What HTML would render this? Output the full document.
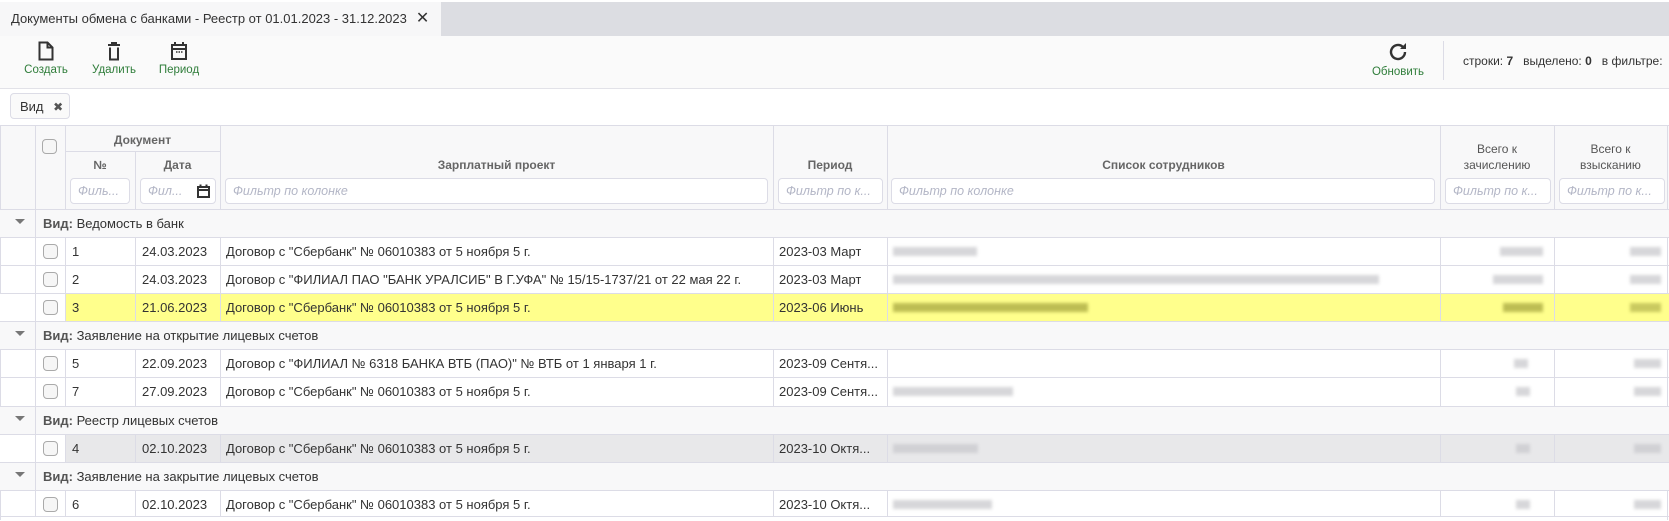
<!DOCTYPE html>
<html><head><meta charset="utf-8"><style>
*{box-sizing:border-box;margin:0;padding:0}
body{width:1669px;height:521px;overflow:hidden;background:#fff;font-family:"Liberation Sans","DejaVu Sans",sans-serif;font-size:13px;color:#333;position:relative}
.a{position:absolute}
.tabbar{left:0;top:2px;width:1669px;height:34px;background:#dcdde2}
.tab{left:0;top:2px;height:34px;background:#f7f7f8;padding:9px 12px 0 11px;font-size:13px;color:#333;white-space:nowrap;display:flex;align-items:flex-start}
.tb{left:0;top:36px;width:1669px;height:53px;background:#fafafa;border-bottom:1px solid #e2e2e8}
.btn{top:0;text-align:center;color:#2f7d3a;font-size:11.5px}
.btn svg{display:block;margin:5px auto 3px}
.chip{left:10px;top:93px;width:60px;height:26px;border:1px solid #dcdce6;border-radius:4px;background:#fafafa;padding:5px 0 0 9px;font-size:13px}
.v{background:#dcdce6;width:1px}
.h{background:#dcdce6;height:1px}
.hd{color:#666;font-size:12px;font-weight:bold;text-align:center}
.inp{height:26px;border:1px solid #dcdce6;border-radius:4px;background:#fff;font-style:italic;color:#b3b6c6;font-size:12.5px;padding:5px 0 0 7px;white-space:nowrap;overflow:hidden}
.row{left:0;width:1669px;height:28px}
.cb{width:15px;height:15px;border:1px solid #aaa;border-radius:4px;background:#f6f6f6}
.t{font-size:13px;white-space:nowrap;overflow:hidden}
.bl{background:#c9c9cd;opacity:.75;height:9px;filter:blur(1.5px)}
</style></head><body>
<div class="a tabbar"></div>
<div class="a tab">Документы обмена с банками - Реестр от 01.01.2023 - 31.12.2023<span style="margin-left:9px;font-size:16px;line-height:16px;color:#333">✕</span></div>
<div class="a tb">
 <div class="a btn" style="left:22px;width:48px"><svg width="16" height="20" viewBox="0 0 16 20"><path d="M1.5 1.5h8l5 5v12h-13z M9.5 1.5v5h5" fill="none" stroke="#333" stroke-width="2"/></svg>Создать</div>
 <div class="a btn" style="left:88px;width:52px"><svg width="14" height="20" viewBox="0 0 14 20"><path d="M1 4h12 M4 2h6 M3 6.5v12h8v-12" fill="none" stroke="#333" stroke-width="2"/></svg>Удалить</div>
 <div class="a btn" style="left:155px;width:48px"><svg width="18" height="20" viewBox="0 0 18 20"><path d="M2 4h14v14H2z M2 8h14 M5 1v4 M13 1v4" fill="none" stroke="#333" stroke-width="2"/><path d="M6 11h1.5M8.5 11h1.5M11 11h1.5" stroke="#333" stroke-width="1.5"/></svg>Период</div>
 <div class="a btn" style="left:1370px;width:56px"><svg width="22" height="22" viewBox="0 0 22 22"><path d="M18 11a7 7 0 1 1-2.2-5.1" fill="none" stroke="#333" stroke-width="2.4"/><path d="M19 2v6h-6z" fill="#333"/></svg>Обновить</div>
 <div class="a v" style="left:1443px;top:5px;height:39px"></div>
 <div class="a t" style="left:1463px;top:18px;font-size:12px">строки: <b>7</b>&nbsp;&nbsp; выделено: <b>0</b>&nbsp;&nbsp; в фильтре:</div>
</div>
<div class="a chip">Вид <span style="font-size:12px;margin-left:6px;color:#555">✖</span></div>
<div class="a" style="left:0;top:125px;width:1669px;height:84px;background:#f8f8f9"></div>
<div class="a h" style="left:0;top:125px;width:1669px"></div>
<div class="a h" style="left:65px;top:151px;width:155px"></div>
<div class="a v" style="left:0;top:125px;height:395px"></div>
<div class="a v" style="left:1667px;top:125px;height:395px"></div>
<div class="a cb" style="left:42px;top:139px"></div>
<div class="a hd" style="left:65px;top:133px;width:155px">Документ</div>
<div class="a hd" style="left:65px;top:158px;width:70px">№</div>
<div class="a hd" style="left:135px;top:158px;width:85px">Дата</div>
<div class="a hd" style="left:220px;top:158px;width:553px">Зарплатный проект</div>
<div class="a hd" style="left:773px;top:158px;width:114px">Период</div>
<div class="a hd" style="left:887px;top:158px;width:553px">Список сотрудников</div>
<div class="a hd" style="left:1440px;top:141px;width:114px;line-height:16px;font-weight:normal;color:#555">Всего к<br>зачислению</div>
<div class="a hd" style="left:1554px;top:141px;width:113px;line-height:16px;font-weight:normal;color:#555">Всего к<br>взысканию</div>
<div class="a inp" style="left:70px;top:178px;width:60px">Филь...</div>
<div class="a inp" style="left:140px;top:178px;width:76px">Фил...<svg style="position:absolute;right:5px;top:5px" width="13" height="14" viewBox="0 0 13 14"><path d="M1 3h11v10H1z M1 6h11 M3.5 0.5v3 M9.5 0.5v3" fill="none" stroke="#333" stroke-width="2"/></svg></div>
<div class="a inp" style="left:225px;top:178px;width:543px">Фильтр по колонке</div>
<div class="a inp" style="left:778px;top:178px;width:105px">Фильтр по к...</div>
<div class="a inp" style="left:891px;top:178px;width:544px">Фильтр по колонке</div>
<div class="a inp" style="left:1445px;top:178px;width:106px">Фильтр по к...</div>
<div class="a inp" style="left:1559px;top:178px;width:106px">Фильтр по к...</div>
<div class="a v" style="left:35px;top:125px;height:84px"></div>
<div class="a v" style="left:65px;top:125px;height:84px"></div>
<div class="a v" style="left:135px;top:151px;height:58px"></div>
<div class="a v" style="left:220px;top:125px;height:84px"></div>
<div class="a v" style="left:773px;top:125px;height:84px"></div>
<div class="a v" style="left:887px;top:125px;height:84px"></div>
<div class="a v" style="left:1440px;top:125px;height:84px"></div>
<div class="a v" style="left:1554px;top:125px;height:84px"></div>

<div class="a row" style="top:209px;background:#f8f8f9;border-top:1px solid #dcdce6"><span class="a" style="left:15px;top:9px;border-left:5px solid transparent;border-right:5px solid transparent;border-top:5px solid #777"></span><div class="a v" style="left:35px;top:0;height:28px"></div><span class="a t" style="left:43px;top:6px"><b style="color:#555">Вид:</b> Ведомость в банк</span></div>

<div class="a row" style="top:237px;border-top:1px solid #dcdce6"><div class="a v" style="left:35px;height:28px"></div><div class="a cb" style="left:43px;top:6px"></div><div class="a v" style="left:65px;height:28px"></div><div class="a v" style="left:135px;height:28px"></div><div class="a v" style="left:220px;height:28px"></div><div class="a v" style="left:773px;height:28px"></div><div class="a v" style="left:887px;height:28px"></div><div class="a v" style="left:1440px;height:28px"></div><div class="a v" style="left:1554px;height:28px"></div>
<span class="a t" style="left:72px;top:6px">1</span><span class="a t" style="left:142px;top:6px">24.03.2023</span><span class="a t" style="left:226px;top:6px">Договор с "Сбербанк" № 06010383 от 5 ноября 5 г.</span><span class="a t" style="left:779px;top:6px">2023-03 Март</span>
<div class="a bl" style="left:893px;top:9px;width:84px"></div><div class="a bl" style="left:1500px;top:9px;width:43px"></div><div class="a bl" style="left:1630px;top:9px;width:31px"></div></div>

<div class="a row" style="top:265px;border-top:1px solid #dcdce6"><div class="a v" style="left:35px;height:28px"></div><div class="a cb" style="left:43px;top:6px"></div><div class="a v" style="left:65px;height:28px"></div><div class="a v" style="left:135px;height:28px"></div><div class="a v" style="left:220px;height:28px"></div><div class="a v" style="left:773px;height:28px"></div><div class="a v" style="left:887px;height:28px"></div><div class="a v" style="left:1440px;height:28px"></div><div class="a v" style="left:1554px;height:28px"></div>
<span class="a t" style="left:72px;top:6px">2</span><span class="a t" style="left:142px;top:6px">24.03.2023</span><span class="a t" style="left:226px;top:6px">Договор с "ФИЛИАЛ ПАО "БАНК УРАЛСИБ" В Г.УФА" № 15/15-1737/21 от 22 мая 22 г.</span><span class="a t" style="left:779px;top:6px">2023-03 Март</span>
<div class="a bl" style="left:893px;top:9px;width:486px"></div><div class="a bl" style="left:1493px;top:9px;width:50px"></div><div class="a bl" style="left:1630px;top:9px;width:31px"></div></div>

<div class="a row" style="top:293px;border-top:1px solid #dcdce6;background:#ffff8c"><div class="a" style="left:0;width:65px;height:28px;background:#fff"></div><div class="a v" style="left:35px;height:28px"></div><div class="a cb" style="left:43px;top:6px"></div><div class="a v" style="left:65px;height:28px"></div><div class="a v" style="left:135px;height:28px"></div><div class="a v" style="left:220px;height:28px"></div><div class="a v" style="left:773px;height:28px"></div><div class="a v" style="left:887px;height:28px"></div><div class="a v" style="left:1440px;height:28px"></div><div class="a v" style="left:1554px;height:28px"></div>
<span class="a t" style="left:72px;top:6px">3</span><span class="a t" style="left:142px;top:6px">21.06.2023</span><span class="a t" style="left:226px;top:6px">Договор с "Сбербанк" № 06010383 от 5 ноября 5 г.</span><span class="a t" style="left:779px;top:6px">2023-06 Июнь</span>
<div class="a bl" style="left:893px;top:9px;width:195px;background:#a8a840"></div><div class="a bl" style="left:1503px;top:9px;width:40px;background:#a8a840"></div><div class="a bl" style="left:1630px;top:9px;width:31px;background:#b8b850"></div></div>

<div class="a row" style="top:321px;background:#f8f8f9;border-top:1px solid #dcdce6"><span class="a" style="left:15px;top:9px;border-left:5px solid transparent;border-right:5px solid transparent;border-top:5px solid #777"></span><div class="a v" style="left:35px;height:28px"></div><span class="a t" style="left:43px;top:6px"><b style="color:#555">Вид:</b> Заявление на открытие лицевых счетов</span></div>

<div class="a row" style="top:349px;border-top:1px solid #dcdce6"><div class="a v" style="left:35px;height:28px"></div><div class="a cb" style="left:43px;top:6px"></div><div class="a v" style="left:65px;height:28px"></div><div class="a v" style="left:135px;height:28px"></div><div class="a v" style="left:220px;height:28px"></div><div class="a v" style="left:773px;height:28px"></div><div class="a v" style="left:887px;height:28px"></div><div class="a v" style="left:1440px;height:28px"></div><div class="a v" style="left:1554px;height:28px"></div>
<span class="a t" style="left:72px;top:6px">5</span><span class="a t" style="left:142px;top:6px">22.09.2023</span><span class="a t" style="left:226px;top:6px">Договор с "ФИЛИАЛ № 6318 БАНКА ВТБ (ПАО)" № ВТБ от 1 января 1 г.</span><span class="a t" style="left:779px;top:6px">2023-09 Сентя...</span>
<div class="a bl" style="left:1514px;top:9px;width:14px"></div><div class="a bl" style="left:1634px;top:9px;width:27px"></div></div>

<div class="a row" style="top:377px;border-top:1px solid #dcdce6"><div class="a v" style="left:35px;height:28px"></div><div class="a cb" style="left:43px;top:6px"></div><div class="a v" style="left:65px;height:28px"></div><div class="a v" style="left:135px;height:28px"></div><div class="a v" style="left:220px;height:28px"></div><div class="a v" style="left:773px;height:28px"></div><div class="a v" style="left:887px;height:28px"></div><div class="a v" style="left:1440px;height:28px"></div><div class="a v" style="left:1554px;height:28px"></div>
<span class="a t" style="left:72px;top:6px">7</span><span class="a t" style="left:142px;top:6px">27.09.2023</span><span class="a t" style="left:226px;top:6px">Договор с "Сбербанк" № 06010383 от 5 ноября 5 г.</span><span class="a t" style="left:779px;top:6px">2023-09 Сентя...</span>
<div class="a bl" style="left:893px;top:9px;width:120px"></div><div class="a bl" style="left:1516px;top:9px;width:14px"></div><div class="a bl" style="left:1634px;top:9px;width:27px"></div></div>

<div class="a row" style="top:406px;background:#f8f8f9;border-top:1px solid #dcdce6"><span class="a" style="left:15px;top:9px;border-left:5px solid transparent;border-right:5px solid transparent;border-top:5px solid #777"></span><div class="a v" style="left:35px;height:28px"></div><span class="a t" style="left:43px;top:6px"><b style="color:#555">Вид:</b> Реестр лицевых счетов</span></div>

<div class="a row" style="top:434px;border-top:1px solid #dcdce6;background:#e8e8ea"><div class="a" style="left:0;width:65px;height:28px;background:#fff"></div><div class="a v" style="left:35px;height:28px"></div><div class="a cb" style="left:43px;top:6px"></div><div class="a v" style="left:65px;height:28px"></div><div class="a v" style="left:135px;height:28px"></div><div class="a v" style="left:220px;height:28px"></div><div class="a v" style="left:773px;height:28px"></div><div class="a v" style="left:887px;height:28px"></div><div class="a v" style="left:1440px;height:28px"></div><div class="a v" style="left:1554px;height:28px"></div>
<span class="a t" style="left:72px;top:6px">4</span><span class="a t" style="left:142px;top:6px">02.10.2023</span><span class="a t" style="left:226px;top:6px">Договор с "Сбербанк" № 06010383 от 5 ноября 5 г.</span><span class="a t" style="left:779px;top:6px">2023-10 Октя...</span>
<div class="a bl" style="left:893px;top:9px;width:85px"></div><div class="a bl" style="left:1516px;top:9px;width:14px"></div><div class="a bl" style="left:1634px;top:9px;width:27px"></div></div>

<div class="a row" style="top:462px;background:#f8f8f9;border-top:1px solid #dcdce6"><span class="a" style="left:15px;top:9px;border-left:5px solid transparent;border-right:5px solid transparent;border-top:5px solid #777"></span><div class="a v" style="left:35px;height:28px"></div><span class="a t" style="left:43px;top:6px"><b style="color:#555">Вид:</b> Заявление на закрытие лицевых счетов</span></div>

<div class="a row" style="top:490px;border-top:1px solid #dcdce6;border-bottom:1px solid #dcdce6;height:27px"><div class="a v" style="left:35px;height:26px"></div><div class="a cb" style="left:43px;top:6px"></div><div class="a v" style="left:65px;height:26px"></div><div class="a v" style="left:135px;height:26px"></div><div class="a v" style="left:220px;height:26px"></div><div class="a v" style="left:773px;height:26px"></div><div class="a v" style="left:887px;height:26px"></div><div class="a v" style="left:1440px;height:26px"></div><div class="a v" style="left:1554px;height:26px"></div>
<span class="a t" style="left:72px;top:6px">6</span><span class="a t" style="left:142px;top:6px">02.10.2023</span><span class="a t" style="left:226px;top:6px">Договор с "Сбербанк" № 06010383 от 5 ноября 5 г.</span><span class="a t" style="left:779px;top:6px">2023-10 Октя...</span>
<div class="a bl" style="left:893px;top:9px;width:99px"></div><div class="a bl" style="left:1516px;top:9px;width:14px"></div><div class="a bl" style="left:1634px;top:9px;width:27px"></div></div>
</body></html>
